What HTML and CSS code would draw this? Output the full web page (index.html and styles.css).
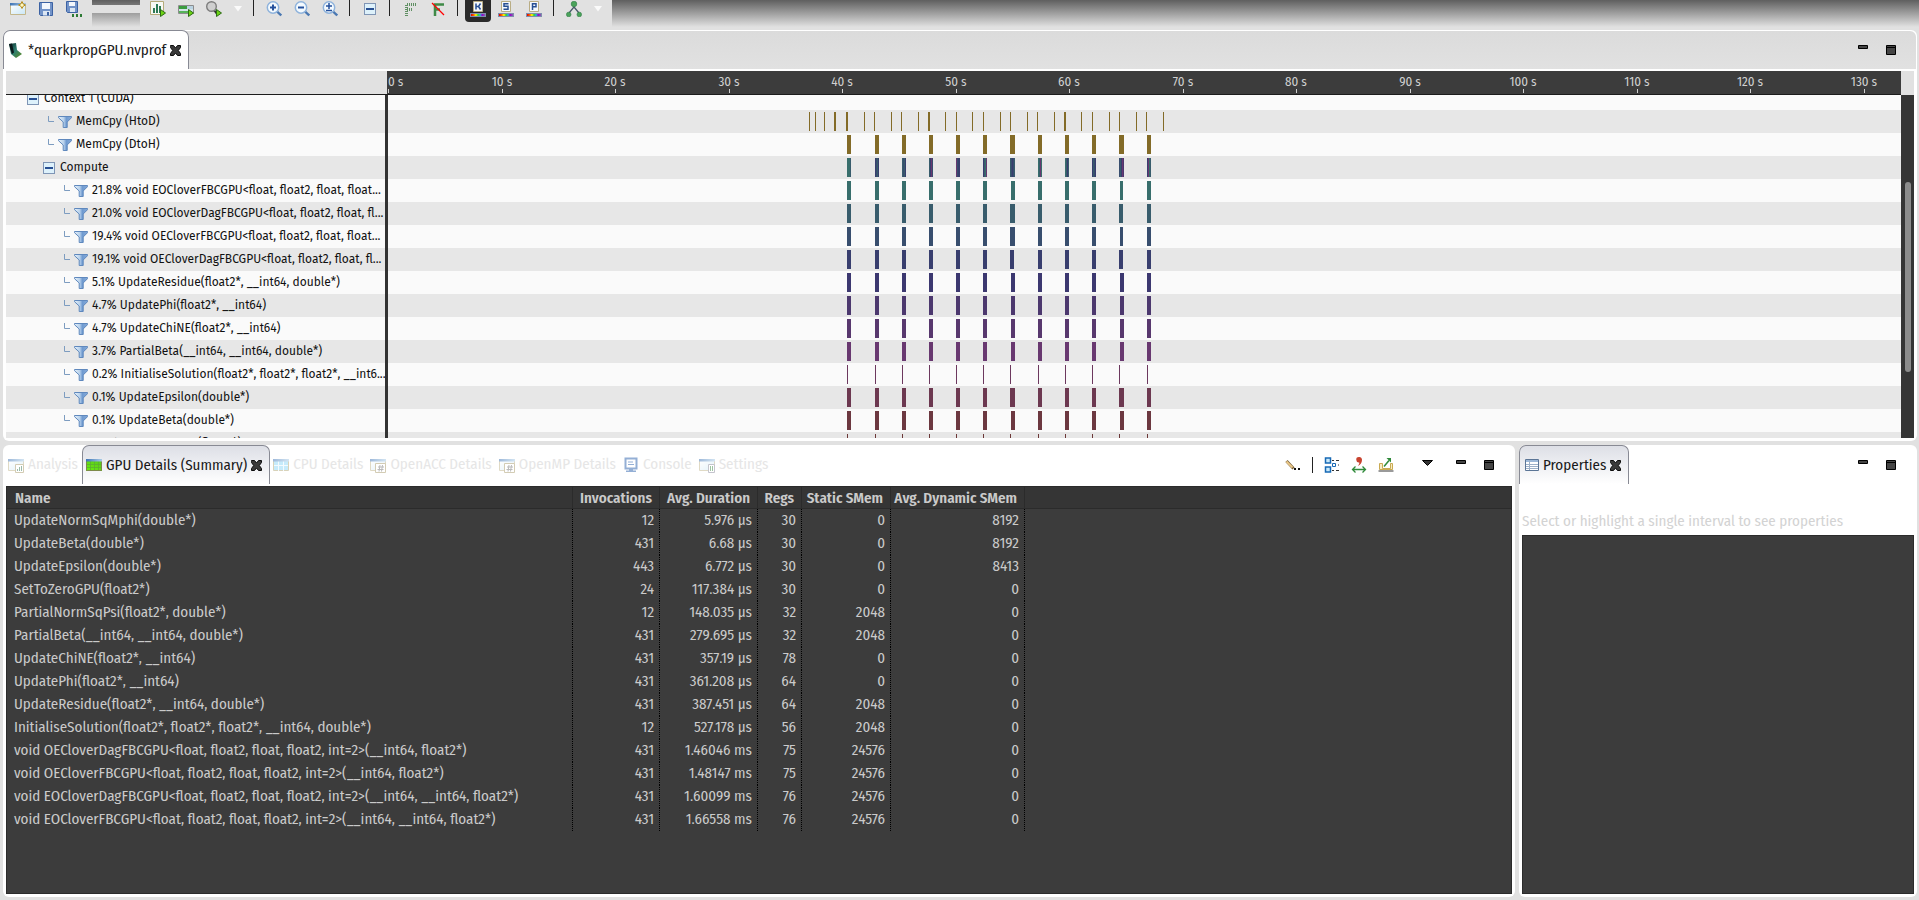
FILE: index.html
```html
<!DOCTYPE html>
<html lang="en">
<head>
<meta charset="utf-8">
<title>NVIDIA Visual Profiler</title>
<link rel="stylesheet" href="styles.css">
</head>
<body>
<svg class="defs" aria-hidden="true">
  <defs>
    <linearGradient id="g-title" x1="0" x2="1"><stop offset="0" stop-color="#3f74b5"/><stop offset="1" stop-color="#a9cbe6"/></linearGradient>
    <linearGradient id="g-pane" x1="0" x2="1" y2="1"><stop offset="0" stop-color="#ffffff"/><stop offset="1" stop-color="#c9e6f5"/></linearGradient>
    <linearGradient id="g-funnel" x1="0" x2="1"><stop offset="0" stop-color="#e6f1fa"/><stop offset=".4" stop-color="#b9d2ec"/><stop offset=".6" stop-color="#6f9ad0"/><stop offset="1" stop-color="#86abd9"/></linearGradient>
    <linearGradient id="g-chip" x1="0" x2="1" y2="1"><stop offset="0" stop-color="#0d3330"/><stop offset=".5" stop-color="#2f7f72"/><stop offset="1" stop-color="#5c8a1e"/></linearGradient>
    <linearGradient id="g-green" x1="0" y1="1" x2="1" y2="0"><stop offset="0" stop-color="#6cf00c"/><stop offset="1" stop-color="#58c81c"/></linearGradient>
    <linearGradient id="g-rain" x1="0" x2="1"><stop offset="0" stop-color="#d00"/><stop offset=".2" stop-color="#f60"/><stop offset=".35" stop-color="#ff0"/><stop offset=".5" stop-color="#3c3"/><stop offset=".65" stop-color="#2bd"/><stop offset=".8" stop-color="#90c"/><stop offset="1" stop-color="#86a"/></linearGradient>
    <symbol id="i-funnel" viewBox="0 0 14 12"><path d="M.5.5h13v1.200L9.200 6v5.500H5.200V6L.5 1.700z" fill="url(#g-funnel)" stroke="#5f88bd" stroke-width="1"/></symbol>
    <symbol id="i-elbow" viewBox="0 0 6 6"><path d="M.5 0v5.500H6" fill="none" stroke="#7d9cc0"/></symbol>
    <symbol id="i-minus" viewBox="0 0 12 12"><rect x=".5" y=".5" width="11" height="11" fill="#ddf1fb" stroke="#7f95b5"/><path d="M2 5h8v2H2z" fill="#274f93"/></symbol>
    <symbol id="i-close" viewBox="0 0 11 11"><path d="M.5 1.500V.5H3.500L5.500 3 7.500.5h3v2L8.300 5.500l2.200 3v2h-3L5.500 8l-2 2.500h-3v-2l2.200-3L.5 2.500z" fill="#3a3a3a" stroke="#0c0c0c"/></symbol>
    <symbol id="i-min" viewBox="0 0 10 4"><path d="M.5.5h9v3h-9z" fill="#444" stroke="#000"/></symbol>
    <symbol id="i-max" viewBox="0 0 10 10"><path d="M.5.5h9v9h-9z" fill="#444" stroke="#000"/><path d="M1 2.500h8" stroke="#000"/></symbol>
    <symbol id="i-go" viewBox="0 0 6 8"><path d="M.5.5v7L5.500 4z" fill="#6cd313" stroke="#2c6b14"/></symbol>
    <symbol id="i-lens" viewBox="0 0 16 16"><path d="M11 10.500l4.200 4" stroke="#4a78b2" stroke-width="2.400"/><circle cx="7" cy="6.500" r="5.700" fill="#f4fafe" stroke="#8fb3dc" stroke-width="1.500"/></symbol>
    <symbol id="i-window" viewBox="0 0 16 16"><path d="M.5 3.500h15v10H.5z" fill="url(#g-pane)" stroke="#c3b78c"/><path d="M0 2h16v2.500H0z" fill="url(#g-title)"/></symbol>
    <symbol id="i-strip" viewBox="0 0 16 4"><path d="M0 0h16v4H0z" fill="#7f8fae"/><path d="M1 1h14v2H1z" fill="url(#g-rain)"/></symbol>
  </defs>
</svg>

<header class="toolbar">
  <div class="group group-file">
    <button class="tool" aria-label="New session"><svg viewBox="0 0 16 16"><use href="#i-window"/><path d="M12 0.500l1.200 2.500L15.500 4l-2.300 1.200L12 7.500l-1.200-2.300L8.500 4l2.300-1z" fill="#fff8c0" stroke="#b58a1c"/></svg></button>
    <button class="tool" aria-label="Save"><svg viewBox="0 0 16 16"><path d="M1.500 1.500h13v13h-12l-1-1z" fill="#7293c8" stroke="#3c62a3"/><path d="M4 2h8v6H4z" fill="#f3f7fc"/><path d="M5 10h7v4.500H5z" fill="#dbe6f3"/><path d="M9 11h2v3.500H9z" fill="#3c62a3"/></svg></button>
    <button class="tool" aria-label="Save as"><svg viewBox="0 0 16 16"><path d="M.5.5h11v11h-10l-1-1z" fill="#7293c8" stroke="#3c62a3"/><path d="M3 1h6v4H3z" fill="#f3f7fc"/><path d="M4 7h5v4H4z" fill="#dbe6f3"/><path d="M6 13h2v3H6zM10 13h2v3h-2zM14 13h2v3h-2z" fill="#2d7a35"/></svg></button>
  </div>
  <div class="slot"></div>
  <div class="group group-main">
    <button class="tool" aria-label="Profile application"><svg viewBox="0 0 16 16"><path d="M.5.5h13v13H.5z" fill="#f7f9f4" stroke="#b5ab7a"/><path d="M3 7h2v5H3zM6 3h2v9H6zM9 5h2v7H9z" fill="#2d7a55"/><use href="#i-go" x="10" y="8" width="6" height="8"/></svg></button>
    <button class="tool" aria-label="Generate timeline"><svg viewBox="0 0 16 16"><path d="M.5 4.500h15v8H.5z" fill="#d3e4e8" stroke="#8c8c8c"/><path d="M1 5h8v3H1z" fill="#3a9c3f"/><path d="M9 5h6v3H9z" fill="#b9d3e2"/><path d="M1 10h9v2H1z" fill="#56b35a"/><use href="#i-go" x="10" y="8" width="6" height="8"/></svg></button>
    <button class="tool" aria-label="Analyze"><svg viewBox="0 0 16 16"><path d="M8 9l3 4" stroke="#333" stroke-width="2"/><circle cx="5.500" cy="5.500" r="4.800" fill="#cfcfcf" stroke="#7d7d7d" stroke-width="1.400"/><use href="#i-go" x="10" y="8" width="6" height="8"/></svg></button>
    <button class="tool tool-drop" aria-label="Analyze options"><svg viewBox="0 0 8 6"><path d="M0 0h8L4 5.500z" fill="#fafafa"/></svg></button>
    <i class="rule"></i>
    <button class="tool" aria-label="Zoom in"><svg viewBox="0 0 16 16"><use href="#i-lens"/><path d="M4 6.500h6M7 3.500v6" stroke="#24509c" stroke-width="2"/></svg></button>
    <button class="tool" aria-label="Zoom out"><svg viewBox="0 0 16 16"><use href="#i-lens"/><path d="M4 6.500h6" stroke="#24509c" stroke-width="2"/></svg></button>
    <button class="tool" aria-label="Reset zoom"><svg viewBox="0 0 16 16"><use href="#i-lens"/><path d="M4 5h6M7 2v6M4 9.500h6" stroke="#24509c" stroke-width="1.500"/></svg></button>
    <i class="rule"></i>
    <button class="tool" aria-label="Collapse all"><svg viewBox="0 0 16 16"><use href="#i-minus" x="2" y="2" width="12" height="12"/></svg></button>
    <i class="rule"></i>
    <button class="tool" aria-label="Focus"><svg viewBox="0 0 16 16"><path d="M4.500 15V3.500H14M5 8.500h5" fill="none" stroke="#5f8f62" stroke-width="3" stroke-dasharray="1 1"/></svg></button>
    <button class="tool" aria-label="Clear focus"><svg viewBox="0 0 16 16"><path d="M5 15V3.500h9M5 8.500h5" fill="none" stroke="#3f8a47" stroke-width="2.500"/><path d="M2 2l12 12" stroke="#f00" stroke-width="1.300"/></svg></button>
    <i class="rule"></i>
    <button class="tool tool-on" aria-label="Color by kernel"><svg viewBox="0 0 16 16"><path d="M3.500.5h9v10h-9z" fill="#f4f8fd" stroke="#b9ad85"/><path d="M6 2.500v6M6.500 5.500h2l2-3M8.500 5.500l2 3" fill="none" stroke="#274f93" stroke-width="1.500"/><use href="#i-strip" y="12" width="16" height="4"/></svg></button>
    <button class="tool" aria-label="Color by stream"><svg viewBox="0 0 16 16"><path d="M3.500.5h9v10h-9z" fill="#f4f8fd" stroke="#b9ad85"/><path d="M10.500 2.700H6v2.600h4v3H5.500" fill="none" stroke="#274f93" stroke-width="1.500"/><use href="#i-strip" y="12" width="16" height="4"/></svg></button>
    <button class="tool" aria-label="Color by process"><svg viewBox="0 0 16 16"><path d="M3.500.5h9v10h-9z" fill="#f4f8fd" stroke="#b9ad85"/><path d="M6.500 9V2.700H10v3H6.500" fill="none" stroke="#274f93" stroke-width="1.500"/><use href="#i-strip" y="12" width="16" height="4"/></svg></button>
    <i class="rule"></i>
    <button class="tool" aria-label="Dependency analysis"><svg viewBox="0 0 16 16"><path d="M8 4v2L3 12M8 6l5 6" fill="none" stroke="#4a5a6a" stroke-width="1.300"/><g fill="#4aa35a" stroke="#2d7a45" stroke-width=".6"><circle cx="8" cy="3" r="2.800"/><circle cx="2.700" cy="13.500" r="2.300"/><circle cx="13.300" cy="13.500" r="2.300"/></g></svg></button>
    <button class="tool tool-drop" aria-label="Dependency options"><svg viewBox="0 0 8 6"><path d="M0 0h8L4 5.500z" fill="#fafafa"/></svg></button>
  </div>
</header>

<main class="workbench">
  <section class="panel editor">
    <div class="tabs tabs-editor">
      <div class="tab tab-on">
        <svg class="ico" viewBox="0 0 16 16"><path d="M1 2l7-1 1 7 5 4-6 4-5-4z" fill="url(#g-chip)"/><path d="M1 2l3-.5 2 9-2 1.500z" fill="#0b1a1c"/></svg>
        <span>*quarkpropGPU.nvprof</span>
        <button class="close" aria-label="Close"><svg viewBox="0 0 11 11"><use href="#i-close"/></svg></button>
      </div>
      <div class="winctl">
        <button class="w-min" aria-label="Minimize"><svg viewBox="0 0 10 4"><use href="#i-min"/></svg></button>
        <button class="w-max" aria-label="Maximize"><svg viewBox="0 0 10 10"><use href="#i-max"/></svg></button>
      </div>
    </div>
    <div class="timeline">
      <div class="ruler-row"><div class="ruler-pad"></div><div class="ruler" id="ruler"></div><div class="ruler-end"></div></div>
      <div class="viewport">
        <div class="rows" id="rows"></div>
        <div class="scrollbar"><div class="thumb"></div></div>
      </div>
    </div>
  </section>

  <div class="bottom">
    <section class="panel details">
      <div class="tabs">
        <div class="tab"><svg class="ico dim" viewBox="0 0 16 16"><use href="#i-window"/><path d="M7.500 7.500h8v8h-8z" fill="#fff" stroke="#a89a6c"/><path d="M9 12h1v2H9zM11 10h1v4h-1zM13 9h1v5h-1z" fill="#3a7a55"/></svg><span>Analysis</span></div>
        <div class="tab tab-on">
          <svg class="ico" viewBox="0 0 16 16"><path d="M0 4h16v10H0z" fill="url(#g-green)"/><path d="M0 7.500h16M0 10.500h16M4.500 4v10M8.500 4v10M12.500 4v10" stroke="#5cb030" stroke-width=".8"/><path d="M.5 4v9.500h15V4" fill="none" stroke="#7d8a4a"/><path d="M0 2h16v2.500H0z" fill="url(#g-title)"/></svg>
          <span>GPU Details (Summary)</span>
          <button class="close" aria-label="Close"><svg viewBox="0 0 11 11"><use href="#i-close"/></svg></button>
        </div>
        <div class="tab"><svg class="ico dim" viewBox="0 0 16 16"><path d="M.5 3.500h15v10H.5z" fill="#8fd8f8" stroke="#b5a878"/><path d="M1 8.500h14M5.500 4v10M10.500 4v10" stroke="#e8f8ff"/><path d="M0 2h16v2.500H0z" fill="url(#g-title)"/></svg><span>CPU Details</span></div>
        <div class="tab"><svg class="ico dim" viewBox="0 0 16 16"><use href="#i-window"/><path d="M5.500 6.500h10v9h-10z" fill="#fff" stroke="#a89a6c"/><path d="M8 10h6M7.500 12.500h6M10 8l-1 6.500M12.500 8l-1 6.500" stroke="#777"/></svg><span>OpenACC Details</span></div>
        <div class="tab"><svg class="ico dim" viewBox="0 0 16 16"><use href="#i-window"/><path d="M5.500 6.500h10v9h-10z" fill="#fff" stroke="#a89a6c"/><path d="M8 10h6M7.500 12.500h6M10 8l-1 6.500M12.500 8l-1 6.500" stroke="#777"/></svg><span>OpenMP Details</span></div>
        <div class="tab"><svg class="ico dim" viewBox="0 0 16 16"><path d="M2.500 1.500h11v10h-11z" fill="#fff" stroke="#2b62ad" stroke-width="2"/><path d="M5 5h5M5 7.500h6" stroke="#2b62ad"/><path d="M6 12h4v1.500h3V15H3v-1.500h3z" fill="#2b62ad"/></svg><span>Console</span></div>
        <div class="tab"><svg class="ico dim" viewBox="0 0 16 16"><use href="#i-window"/><path d="M9.500 7.500h6v8h-6z" fill="#fff" stroke="#8a8a9c"/><path d="M11.500 9v5M13.500 9v5" stroke="#3f8a47"/></svg><span>Settings</span></div>
        <div class="viewtools">
          <button aria-label="Edit filter"><svg viewBox="0 0 16 16"><path d="M1.500 4l7 7.500" stroke="#7a6238" stroke-width="3"/><path d="M1.500 4.500l6 6" stroke="#ecc98a" stroke-width="1.800"/><path d="M9 11h2v2H9zM13 11h2v2h-2z" fill="#111"/></svg></button>
          <i class="vrule"></i>
          <button aria-label="Summary mode"><svg viewBox="0 0 16 16"><path d="M1.500 1h5v5h-5zM1.500 10h5v5h-5z" fill="#c9e8fa" stroke="#1769b5" stroke-width="1.500"/><path d="M8 3.500h2M12 3.500h3M8 13.500h2M12 13.500h3M14 8h1" stroke="#333"/><path d="M8.500 6.500h3v3h-3z" fill="#fff" stroke="#1769b5"/></svg></button>
          <button aria-label="Number format"><svg viewBox="0 0 16 16"><path d="M8 0a2.800 2.800 0 0 1 3 3c0 3-2 5-4 6 1-1.500 1.500-2.500 1.200-3.500A2.700 2.700 0 0 1 5.300 3 2.700 2.700 0 0 1 8 0z" fill="#c8432f"/><path d="M2 12.500h12M4.500 9.500l-3 3 3 3M11.500 9.500l3 3-3 3" fill="none" stroke="#2f8a3a" stroke-width="1.300"/></svg></button>
          <button aria-label="Export"><svg viewBox="0 0 16 16"><path d="M1.500 6.500h3v5h8v-5h2v6h-13z" fill="#f6ebc4" stroke="#c9aa52"/><path d="M.5 13h15v2H.5z" fill="#9a9a9a"/><path d="M6 9.500l5-6" stroke="#2f8a3a" stroke-width="1.500"/><path d="M8.500 1H13v4.500z" fill="#2f8a3a"/></svg></button>
          <button class="v-menu" aria-label="View menu"><svg viewBox="0 0 11 6"><path d="M.5.5h10l-5 5z" fill="#333" stroke="#000"/></svg></button>
        </div>
        <div class="winctl">
          <button class="w-min" aria-label="Minimize"><svg viewBox="0 0 10 4"><use href="#i-min"/></svg></button>
          <button class="w-max" aria-label="Maximize"><svg viewBox="0 0 10 10"><use href="#i-max"/></svg></button>
        </div>
      </div>
      <div class="sheet">
        <div class="sheet-head"></div>
        <table>
          <thead><tr><th class="c-name">Name</th><th class="c-inv">Invocations</th><th class="c-dur">Avg. Duration</th><th class="c-regs">Regs</th><th class="c-stat">Static SMem</th><th class="c-dyn">Avg. Dynamic SMem</th></tr></thead>
          <tbody id="summary"></tbody>
        </table>
      </div>
    </section>

    <section class="panel properties">
      <div class="tabs">
        <div class="tab tab-on">
          <svg class="ico" viewBox="0 0 16 16"><path d="M2.500 2.500h13v11h-13z" fill="#fff" stroke="#5b7596"/><path d="M3 3h12v2H3z" fill="#9db8d8"/><path d="M3 7.500h12M3 9.500h12M3 11.500h12M6.500 3v10" stroke="#9db0c8"/></svg>
          <span>Properties</span>
          <button class="close" aria-label="Close"><svg viewBox="0 0 11 11"><use href="#i-close"/></svg></button>
        </div>
        <div class="winctl">
          <button class="w-min" aria-label="Minimize"><svg viewBox="0 0 10 4"><use href="#i-min"/></svg></button>
          <button class="w-max" aria-label="Maximize"><svg viewBox="0 0 10 10"><use href="#i-max"/></svg></button>
        </div>
      </div>
      <p class="hint">Select or highlight a single interval to see properties</p>
      <div class="sheet"></div>
    </section>
  </div>
</main>
<script src="app.js"></script>
</body>
</html>
```
FILE: styles.css
```css
* { box-sizing: border-box; }

body {
  margin: 0;
  height: 100vh;
  display: flex;
  flex-direction: column;
  overflow: hidden;
  background: #e1e1e1;
  color: #1a1a1a;
  font: 15px/23px "Fira Sans Condensed", "Roboto Condensed", "Open Sans", sans-serif;
}

button {
  border: 0;
  padding: 0;
  background: none;
  font: inherit;
  display: flex;
  align-items: center;
  justify-content: center;
}

svg { display: block; flex: none; }
.defs { position: absolute; width: 0; height: 0; }

/* toolbar */
.toolbar {
  flex: none;
  display: flex;
  height: 27px;
  margin-bottom: 3px;
  background: linear-gradient(#5f5f5f, #e1e1e1);
}
.group { display: flex; background: #e1e1e1; padding: 0 4px; }
.slot {
  width: 48px;
  background: linear-gradient(transparent 5px, #e1e1e1 5px, #e1e1e1 13px, transparent 13px);
}
.tool { width: 28px; height: 18px; }
.tool svg { width: 16px; height: 16px; }
.tool-drop { width: 20px; }
.tool-drop svg { width: 8px; height: 6px; }
.tool-on {
  width: 26px;
  height: 22px;
  margin: 0 1px;
  padding-bottom: 4px;
  background: #2a2a2a;
  border-radius: 0 0 4px 4px;
}
.rule { width: 1px; height: 16px; margin: 0 6px 0 5px; background: #222; }

/* panels */
.workbench {
  flex: 1;
  min-height: 0;
  display: flex;
  flex-direction: column;
  gap: 4px;
  padding: 0 2px 3px 3px;
}
.panel {
  display: flex;
  flex-direction: column;
  min-width: 0;
  min-height: 0;
  background: #fff;
  border-radius: 6px;
  padding: 0 3px 3px;
}
.editor { flex: 408 1 0; }
.bottom { flex: 452 1 0; min-height: 0; display: flex; gap: 4px; }
.details { flex: 1506 1 0; }
.properties { flex: 392 1 0; }

/* tab strips */
.tabs { flex: none; display: flex; height: 41px; margin: 0 -3px; }
.tab {
  display: flex;
  align-items: center;
  gap: 4px;
  height: 39px;
  padding: 0 4px 0 3px;
  color: #e6e6e6;
  white-space: nowrap;
}
.tab:first-child { padding-left: 5px; }
.tab-on, .tab-on:first-child {
  color: #1a1a1a;
  padding: 0 7px 0 3px;
  border: 1px solid #888a94;
  border-bottom: 0;
  border-radius: 7px 7px 0 0;
  background: linear-gradient(#dddfe6, #fff);
}
.ico { width: 16px; height: 16px; }
.dim { opacity: .5; }
.close svg { width: 11px; height: 11px; }
.tabs-editor {
  margin: 1px -2px 2px;
  height: 38px;
  border-radius: 6px 6px 0 0;
  background: linear-gradient(#dbdbdb, #e1e1e1);
}
.tabs-editor .tab { margin: -1px 0 0 -1px; padding-left: 4px; background: #fff; }
.winctl { display: flex; align-items: flex-start; gap: 18px; margin-left: auto; padding: 15px 21px 0 0; }
.tabs-editor .winctl { padding: 14px 20px 0 0; }
.details .winctl { margin-left: 23px; }
.w-min svg { width: 10px; height: 4px; }
.w-max svg { width: 10px; height: 10px; }
.viewtools { display: flex; align-items: center; height: 39px; gap: 11px; margin-left: auto; }
.viewtools svg { width: 16px; height: 16px; }
.vrule { width: 1px; height: 16px; background: #222; }
.viewtools .v-menu { margin-left: 17px; padding-bottom: 4px; }
.viewtools .v-menu svg { width: 11px; height: 6px; }

/* timeline */
.timeline { flex: 1; min-height: 0; display: flex; flex-direction: column; }
.ruler-row { flex: none; display: flex; height: 24px; }
.ruler-pad { width: 381px; background: #e1e1e1; border-bottom: 1px solid #1c1c1c; }
.ruler {
  position: relative;
  flex: 1;
  overflow: hidden;
  background: #3c3c3c;
  border-bottom: 1px solid #1c1c1c;
  color: #d0d0d0;
  font: 13px/22px "Fira Sans Condensed", "Roboto Condensed", "Open Sans", sans-serif;
}
.ruler-end { width: 13px; background: #e1e1e1; }
.mark { position: absolute; top: 0; height: 22px; width: 60px; margin-left: -30px; text-align: center; }
.mark::after { content: ""; position: absolute; left: 30px; bottom: 0; width: 1px; height: 4px; background: #d0d0d0; }
.mark-first { margin-left: 0; text-align: left; }
.mark-first::after { left: 0; }
.viewport { flex: 1; min-height: 0; display: flex; overflow: hidden; }
.rows { flex: 1; margin-top: -8px; }
.row { display: flex; height: 23px; background: #fafafa; }
.row:nth-child(even) { background: #e7e7e7; }
.label {
  width: 379px;
  display: flex;
  align-items: center;
  padding-left: 21px;
  font: 12px/23px "Fira Sans", "Roboto", "Open Sans", sans-serif;
  color: #111;
  white-space: nowrap;
  overflow: hidden;
}
.depth-1 { padding-left: 42px; }
.depth-2 { padding-left: 37px; }
.depth-3 { padding-left: 58px; }
.elbow { width: 6px; height: 6px; margin: 0 4px 5px 0; }
.funnel { width: 14px; height: 12px; margin-right: 4px; }
.minus { width: 12px; height: 12px; margin-right: 5px; }
.track { position: relative; flex: 1; border-left: 3px solid #333; }
.bar { position: absolute; top: 2px; height: 19px; }
.scrollbar { width: 13px; padding: 87px 3px 0 4px; background: #353535; }
.thumb { height: 190px; border-radius: 3px; background: #8c8c8c; }

/* data sheets */
.sheet { flex: 1; min-height: 0; background: #3c3c3c; border: 1px solid #2b2b2b; color: #cacaca; }
.sheet-head { height: 22px; margin-bottom: -22px; background: #353535; border-bottom: 1px solid #2b2b2b; }
.details .sheet { overflow: hidden; }
table { border-collapse: separate; border-spacing: 0; table-layout: fixed; width: 1018px; }
th, td { height: 23px; padding: 0 6px 0 0; text-align: right; white-space: nowrap; }
td { background: repeating-linear-gradient(#000 0 1px, transparent 1px 2px) right top / 1px 100% no-repeat; }
th { position: relative; height: 22px; line-height: 20px; padding-right: 7px; border-right: 1px solid #2b2b2b; border-bottom: 1px solid #2b2b2b; font-weight: 600; }
th:first-child, td:first-child { text-align: left; padding-left: 7px; }
th:first-child { padding-left: 8px; }
.c-name { width: 566px; }
.c-inv { width: 87px; }
.c-dur { width: 98px; }
.c-regs { width: 44px; }
.c-stat { width: 89px; }
.c-dyn { width: 134px; }
.hint { margin: 0; padding-top: 24px; height: 49px; color: #d3d3d3; white-space: nowrap; }
```
FILE: app.js
```js
const PX_PER_10S = 113.54;
const STARTS = [459, 487, 514, 541, 568, 595, 622, 650, 677, 704, 731, 759];
const GOLD = '#836b28';
const C = { a: '#386e6c', b: '#385c6c', c: '#384e6e', d: '#383e6e', e: '#3c3870', f: '#4c386e', g: '#683870' };

/* kernels: [label, colour, shift of 7th, width of 7th, shift of 11th, width of 11th, width] */
const KERNELS = [
  ['21.8% void EOCloverFBCGPU<float, float2, float, float...', '#386e6c', 1, 4, 1, 3, 4],
  ['21.0% void EOCloverDagFBCGPU<float, float2, float, fl...', '#385c6c', 0, 5, 0, 4, 4],
  ['19.4% void OECloverFBCGPU<float, float2, float, float...', '#384e6e', 0, 5, 1, 3, 4],
  ['19.1% void OECloverDagFBCGPU<float, float2, float, fl...', '#383e6e', 0, 4, 0, 4, 4],
  ['5.1% UpdateResidue(float2*, __int64, double*)', '#3c3870', 1, 4, 1, 4, 4],
  ['4.7% UpdatePhi(float2*, __int64)', '#4c386e', 1, 4, 1, 4, 4],
  ['4.7% UpdateChiNE(float2*, __int64)', '#58386e', 1, 4, 1, 4, 4],
  ['3.7% PartialBeta(__int64, __int64, double*)', '#683870', 1, 4, 1, 4, 4],
  ['0.2% InitialiseSolution(float2*, float2*, float2*, __int6...', '#6c385e', 0, 1, 0, 1, 1],
  ['0.1% UpdateEpsilon(double*)', '#6c3850', 0, 5, 0, 5, 4],
  ['0.1% UpdateBeta(double*)', '#6c3840', 1, 4, 1, 4, 4],
  ['0.0% SetToZeroGPU(float2*)', '#6c3838', 0, 1, 0, 1, 1],
];

const spans = ([, color, s7, w7, s11, w11, w]) => STARTS.map((x, i) =>
  i === 6 ? [x + s7, w7, color] : i === 10 ? [x + s11, w11, color] : [x, w, color]);

const htod = [[421, 1], [427, 1], [436, 1], [446, 2], [458, 2], [476, 1], [486, 1], [503, 1], [513, 1], [530, 1],
  [540, 2], [557, 1], [568, 1], [584, 1], [595, 1], [612, 1], [622, 1], [639, 1], [649, 1], [666, 1], [676, 2],
  [693, 1], [704, 1], [721, 1], [731, 1], [748, 1], [758, 1], [775, 1]].map(([x, w]) => [x, w, GOLD]);

const mixed = ['aaab', 'dcbd', 'bcbd', 'bdgc', 'gcdd', 'dbag', 'bcdcb', 'abga', 'abdb', 'dbcd', 'cbdgf', 'dgab']
  .flatMap((keys, i) => [...keys].map((k, n) => [STARTS[i] + n, 1, C[k]]));

const rows = [
  { depth: 0, text: 'Context 1 (CUDA)', bars: [] },
  { depth: 1, text: 'MemCpy (HtoD)', bars: htod },
  { depth: 1, text: 'MemCpy (DtoH)', bars: spans([, GOLD, 0, 5, 0, 5, 4]) },
  { depth: 2, text: 'Compute', bars: mixed },
  ...KERNELS.map(k => ({ depth: 3, text: k[0], bars: spans(k) })),
];

const use = (name, w, h, id) => `<svg class="${name}" viewBox="0 0 ${w} ${h}"><use href="#${id}"/></svg>`;
const esc = s => s.replace(/</g, '&lt;').replace(/>/g, '&gt;');

document.getElementById('rows').innerHTML = rows.map(r => {
  const icon = r.depth % 2 ? use('elbow', 6, 6, 'i-elbow') + use('funnel', 14, 12, 'i-funnel') : use('minus', 12, 12, 'i-minus');
  const bars = r.bars.map(([x, w, c]) => `<i class="bar" style="left:${x}px;width:${w}px;background:${c}"></i>`).join('');
  return `<div class="row"><div class="label depth-${r.depth}">${icon}<span>${esc(r.text)}</span></div><div class="track">${bars}</div></div>`;
}).join('');

document.getElementById('ruler').innerHTML = Array.from({ length: 14 }, (_, i) =>
  `<span class="mark${i ? '' : ' mark-first'}" style="left:${Math.round(1 + i * PX_PER_10S)}px">${i * 10} s</span>`).join('');

const SUMMARY = [
  ['UpdateNormSqMphi(double*)', '12', '5.976 µs', '30', '0', '8192'],
  ['UpdateBeta(double*)', '431', '6.68 µs', '30', '0', '8192'],
  ['UpdateEpsilon(double*)', '443', '6.772 µs', '30', '0', '8413'],
  ['SetToZeroGPU(float2*)', '24', '117.384 µs', '30', '0', '0'],
  ['PartialNormSqPsi(float2*, double*)', '12', '148.035 µs', '32', '2048', '0'],
  ['PartialBeta(__int64, __int64, double*)', '431', '279.695 µs', '32', '2048', '0'],
  ['UpdateChiNE(float2*, __int64)', '431', '357.19 µs', '78', '0', '0'],
  ['UpdatePhi(float2*, __int64)', '431', '361.208 µs', '64', '0', '0'],
  ['UpdateResidue(float2*, __int64, double*)', '431', '387.451 µs', '64', '2048', '0'],
  ['InitialiseSolution(float2*, float2*, float2*, __int64, double*)', '12', '527.178 µs', '56', '2048', '0'],
  ['void OECloverDagFBCGPU<float, float2, float, float2, int=2>(__int64, float2*)', '431', '1.46046 ms', '75', '24576', '0'],
  ['void OECloverFBCGPU<float, float2, float, float2, int=2>(__int64, float2*)', '431', '1.48147 ms', '75', '24576', '0'],
  ['void EOCloverDagFBCGPU<float, float2, float, float2, int=2>(__int64, __int64, float2*)', '431', '1.60099 ms', '76', '24576', '0'],
  ['void EOCloverFBCGPU<float, float2, float, float2, int=2>(__int64, __int64, float2*)', '431', '1.66558 ms', '76', '24576', '0'],
];
document.getElementById('summary').innerHTML = SUMMARY.map(r =>
  `<tr>${r.map(v => `<td>${esc(v)}</td>`).join('')}</tr>`).join('');
```
